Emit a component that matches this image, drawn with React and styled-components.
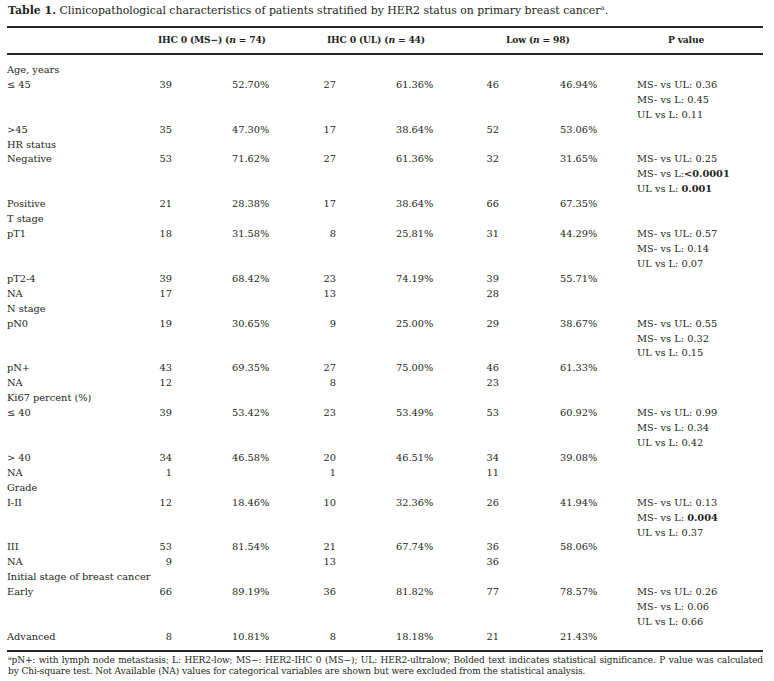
import React from "react";
import styled, { createGlobalStyle } from "styled-components";

const GlobalStyle = createGlobalStyle`
  html, body {
    margin: 0;
    padding: 0;
    background: #ffffff;
  }
  body {
    font-family: "DejaVu Serif", "Liberation Serif", serif;
    color: #231f20;
  }
`;

const Page = styled.div`
  width: 774px;
  padding: 4px 11px 0 7px;
  box-sizing: border-box;
`;

const Caption = styled.div`
  font-size: 10.9px;
  line-height: 14px;
  white-space: nowrap;
  padding-left: 1px;
  margin-bottom: 8px;
  b {
    font-weight: bold;
  }
  sup {
    font-size: 7px;
    vertical-align: 4px;
    line-height: 0;
  }
`;

const Table = styled.table`
  width: 756px;
  border-collapse: collapse;
  table-layout: fixed;
  font-size: 9.8px;
  line-height: 14.92px;
  border-top: 2px solid #262626;
  border-bottom: 2px solid #262626;
`;

const Col = styled.col`
  width: ${(p) => p.$w}px;
`;

const HeadRow = styled.tr`
  border-bottom: 2px solid #262626;
`;

const Th = styled.th`
  font-weight: bold;
  font-size: 9.2px;
  letter-spacing: -0.2px;
  text-align: left;
  padding: 5px 0 5px ${(p) => p.$indent || 0}px;
  height: 14px;
  white-space: nowrap;
`;

const Td = styled.td`
  vertical-align: top;
  padding: 0 0 0 ${(p) => p.$indent || 0}px;
  text-align: ${(p) => (p.$right ? "right" : "left")};
  white-space: nowrap;
  overflow: visible;
`;

const FirstRow = styled.tr`
  td {
    padding-top: 8px;
  }
`;

const LastRow = styled.tr`
  td {
    padding-bottom: 5px;
  }
`;

const PLine = styled.div`
  b {
    font-weight: bold;
  }
`;

const Footnote = styled.div`
  margin: 3px 0 0 1px;
  width: 755px;
  font-size: 9px;
  letter-spacing: -0.1px;
  line-height: 11px;
`;

const FootLine = styled.div`
  white-space: nowrap;
  text-align: ${(p) => (p.$full ? "justify" : "left")};
  text-align-last: ${(p) => (p.$full ? "justify" : "left")};
`;

const FootMark = styled.span`
  font-size: 6px;
  line-height: 0;
  position: relative;
  top: -3px;
`;

const rows = [
  { label: "Age, years" },
  {
    label: "≤ 45",
    v: ["39", "52.70%", "27", "61.36%", "46", "46.94%"],
    p: [["MS- vs UL: 0.36"], ["MS- vs L: 0.45"], ["UL vs L: 0.11"]],
  },
  { label: ">45", v: ["35", "47.30%", "17", "38.64%", "52", "53.06%"] },
  { label: "HR status" },
  {
    label: "Negative",
    v: ["53", "71.62%", "27", "61.36%", "32", "31.65%"],
    p: [["MS- vs UL: 0.25"], ["MS- vs L:", "<0.0001"], ["UL vs L: ", "0.001"]],
  },
  { label: "Positive", v: ["21", "28.38%", "17", "38.64%", "66", "67.35%"] },
  { label: "T stage" },
  {
    label: "pT1",
    v: ["18", "31.58%", "8", "25.81%", "31", "44.29%"],
    p: [["MS- vs UL: 0.57"], ["MS- vs L: 0.14"], ["UL vs L: 0.07"]],
  },
  { label: "pT2-4", v: ["39", "68.42%", "23", "74.19%", "39", "55.71%"] },
  { label: "NA", v: ["17", "", "13", "", "28", ""] },
  { label: "N stage" },
  {
    label: "pN0",
    v: ["19", "30.65%", "9", "25.00%", "29", "38.67%"],
    p: [["MS- vs UL: 0.55"], ["MS- vs L: 0.32"], ["UL vs L: 0.15"]],
  },
  { label: "pN+", v: ["43", "69.35%", "27", "75.00%", "46", "61.33%"] },
  { label: "NA", v: ["12", "", "8", "", "23", ""] },
  { label: "Ki67 percent (%)" },
  {
    label: "≤ 40",
    v: ["39", "53.42%", "23", "53.49%", "53", "60.92%"],
    p: [["MS- vs UL: 0.99"], ["MS- vs L: 0.34"], ["UL vs L: 0.42"]],
  },
  { label: "> 40", v: ["34", "46.58%", "20", "46.51%", "34", "39.08%"] },
  { label: "NA", v: ["1", "", "1", "", "11", ""] },
  { label: "Grade" },
  {
    label: "I-II",
    v: ["12", "18.46%", "10", "32.36%", "26", "41.94%"],
    p: [["MS- vs UL: 0.13"], ["MS- vs L: ", "0.004"], ["UL vs L: 0.37"]],
  },
  { label: "III", v: ["53", "81.54%", "21", "67.74%", "36", "58.06%"] },
  { label: "NA", v: ["9", "", "13", "", "36", ""] },
  { label: "Initial stage of breast cancer" },
  {
    label: "Early",
    v: ["66", "89.19%", "36", "81.82%", "77", "78.57%"],
    p: [["MS- vs UL: 0.26"], ["MS- vs L: 0.06"], ["UL vs L: 0.66"]],
  },
  { label: "Advanced", v: ["8", "10.81%", "8", "18.18%", "21", "21.43%"] },
];

const colWidths = [141, 24, 140, 24, 139, 24, 131, 133];
const pctIndent = [60, 60, 61];

const Cells = ({ row }) => {
  const v = row.v || ["", "", "", "", "", ""];
  return (
    <>
      <Td>{row.label}</Td>
      {[0, 1, 2].map((g) => (
        <React.Fragment key={g}>
          <Td $right>{v[g * 2]}</Td>
          <Td $indent={pctIndent[g]}>{v[g * 2 + 1]}</Td>
        </React.Fragment>
      ))}
      <Td $indent={7}>
        {row.p &&
          row.p.map((line, i) => (
            <PLine key={i}>
              {line[0]}
              {line[1] && <b>{line[1]}</b>}
            </PLine>
          ))}
      </Td>
    </>
  );
};

const App = () => {
  return (
    <Page>
      <GlobalStyle />
      <Caption>
        <b>Table 1.</b> Clinicopathological characteristics of patients stratified by HER2 status
        on primary breast cancer<sup>a</sup>.
      </Caption>
      <Table>
        <colgroup>
          {colWidths.map((w, i) => (
            <Col key={i} $w={w} />
          ))}
        </colgroup>
        <thead>
          <HeadRow>
            <Th />
            <Th colSpan={2} $indent={10}>
              IHC 0 (MS−) (<i>n</i> = 74)
            </Th>
            <Th colSpan={2} $indent={15}>
              IHC 0 (UL) (<i>n</i> = 44)
            </Th>
            <Th colSpan={2} $indent={31}>
              Low (<i>n</i> = 98)
            </Th>
            <Th $indent={38}>P value</Th>
          </HeadRow>
        </thead>
        <tbody>
          {rows.map((row, i) => {
            const Row = i === 0 ? FirstRow : i === rows.length - 1 ? LastRow : "tr";
            return (
              <Row key={i}>
                <Cells row={row} />
              </Row>
            );
          })}
        </tbody>
      </Table>
      <Footnote>
        <FootLine $full>
          <FootMark>a</FootMark>pN+: with lymph node metastasis; L: HER2-low; MS−: HER2-IHC 0
          (MS−); UL: HER2-ultralow; Bolded text indicates statistical significance. P value was
          calculated
        </FootLine>
        <FootLine>
          by Chi-square test. Not Available (NA) values for categorical variables are shown but
          were excluded from the statistical analysis.
        </FootLine>
      </Footnote>
    </Page>
  );
};

export default App;
